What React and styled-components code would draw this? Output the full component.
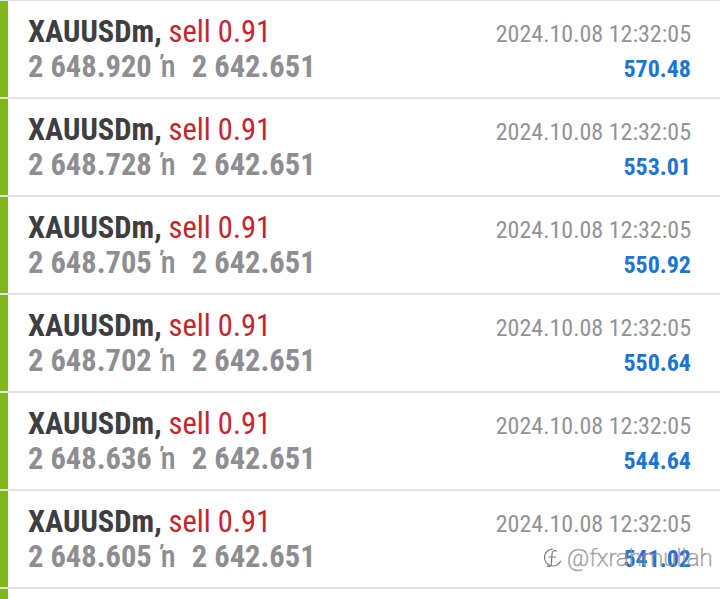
import React from "react";
import styled, { createGlobalStyle } from "styled-components";

const Global = createGlobalStyle`
  html, body { margin: 0; padding: 0; background: #ffffff; }
  body { font-family: Roboto, "Noto Sans", sans-serif; overflow: hidden; }
`;

const List = styled.div`
  position: relative;
  width: 720px;
  height: 599px;
  overflow: hidden;
  border-top: 1px solid #e2e2e2;
  background: #fff;
`;

const Row = styled.div`
  display: flex;
  height: 96px;
  border-bottom: 2px solid #e2e2e2;
`;

const Bar = styled.div`
  width: 8px;
  flex: none;
  background: #80b71a;
`;

const Body = styled.div`
  flex: 1;
  padding: 13px 29px 0 20px;
  display: flex;
  flex-direction: column;
`;

const Line = styled.div`
  display: flex;
  justify-content: space-between;
  align-items: baseline;
  height: 35px;
  line-height: 35px;
  white-space: nowrap;
  font-stretch: condensed;
`;

const Symbol = styled.span`
  font-size: 30.5px;
  font-weight: 700;
  color: #3e3e42;
`;

const Side = styled.span`
  font-size: 30.5px;
  font-weight: 400;
  color: #c1272d;
`;

const Prices = styled.span`
  font-size: 30.5px;
  font-weight: 700;
  color: #8e8e92;
  white-space: pre;
`;

const Arrow = styled.span`
  font-weight: 500;
  margin: 0 2px 0 2px;
`;

const Time = styled.span`
  font-size: 24px;
  font-weight: 400;
  color: #939396;
`;

const Profit = styled.span`
  font-size: 24px;
  font-weight: 700;
  color: #1a76d2;
`;

const Watermark = styled.div`
  position: absolute;
  left: 543px;
  top: 543px;
  display: flex;
  align-items: center;
  gap: 4px;
  font-family: Roboto, sans-serif;
  font-size: 24px;
  font-weight: 200;
  color: rgba(255, 255, 255, 0.55);
  -webkit-text-stroke: 0.7px rgba(110, 110, 110, 0.7);
  pointer-events: none;
`;

const trades = [
  { open: "2 648.920", profit: "570.48" },
  { open: "2 648.728", profit: "553.01" },
  { open: "2 648.705", profit: "550.92" },
  { open: "2 648.702", profit: "550.64" },
  { open: "2 648.636", profit: "544.64" },
  { open: "2 648.605", profit: "541.02" },
];

export default function App() {
  return (
    <>
      <Global />
      <List>
        {trades.map((t, i) => (
          <Row key={i}>
            <Bar />
            <Body>
              <Line>
                <span>
                  <Symbol>XAUUSDm,</Symbol>
                  <Side> sell 0.91</Side>
                </span>
                <Time>2024.10.08 12:32:05</Time>
              </Line>
              <Line>
                <Prices>
                  {t.open + " "}
                  <Arrow>{"\u0149"}</Arrow>
                  {"  2 642.651"}
                </Prices>
                <Profit>{t.profit}</Profit>
              </Line>
            </Body>
          </Row>
        ))}
        <Row>
          <Bar />
          <Body />
        </Row>
        <Watermark>
          <svg width="20" height="24" viewBox="0 0 20 24" fill="none">
            <path
              d="M10 3a8.5 8.5 0 1 0 7.6 12.2M13.5 5c-2.2-1-4.3 0-4.5 2.7l-.6 9.5c-.2 2.6-2.1 3.7-4.3 2.8M6 11h6.5"
              stroke="rgba(100,100,100,0.85)"
              strokeWidth="1.2"
              strokeLinecap="round"
            />
          </svg>
          <span>@fxrahmullah</span>
        </Watermark>
      </List>
    </>
  );
}
